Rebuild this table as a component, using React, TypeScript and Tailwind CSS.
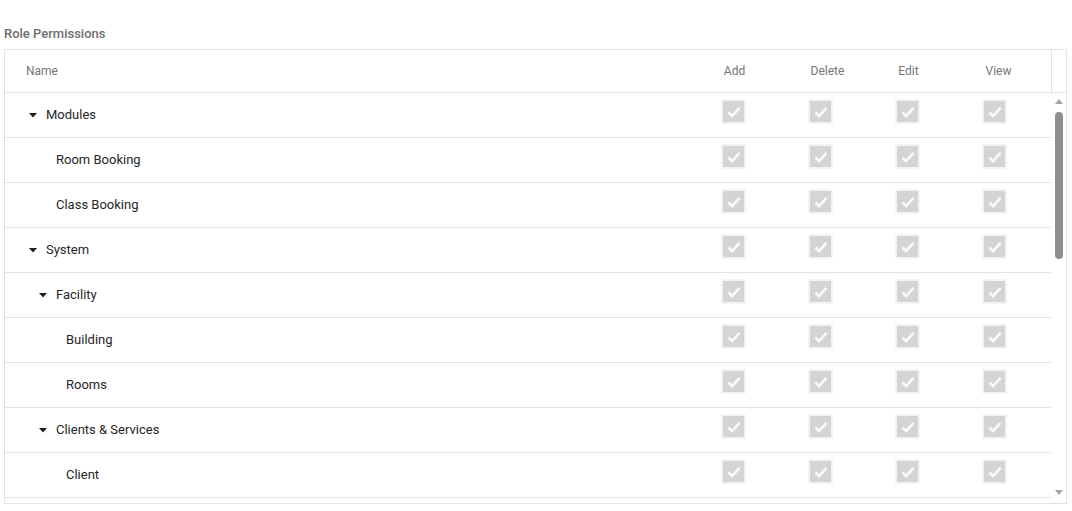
import React from 'react'

type Row = { name: string; level: number; group?: boolean }

const rows: Row[] = [
  { name: 'Modules', level: 0, group: true },
  { name: 'Room Booking', level: 1 },
  { name: 'Class Booking', level: 1 },
  { name: 'System', level: 0, group: true },
  { name: 'Facility', level: 1, group: true },
  { name: 'Building', level: 2 },
  { name: 'Rooms', level: 2 },
  { name: 'Clients & Services', level: 1, group: true },
  { name: 'Client', level: 2 },
  // partly hidden below the fold
  { name: '', level: 2 },
]

const cols = [
  { label: 'Add', pad: 'pl-[2px]' },
  { label: 'Delete', pad: 'pl-[14px]' },
  { label: 'Edit', pad: 'pl-[2px]' },
  { label: 'View', pad: 'pl-[8px]' },
]

const indent = ['pl-[23px]', 'pl-[33px]', 'pl-[43px]']
const leafIndent = ['pl-[41px]', 'pl-[51px]', 'pl-[61px]']

function Caret() {
  return (
    <svg width="10" height="6" viewBox="0 0 10 6" className="mr-[8px] shrink-0">
      <path d="M1 1h8L5 5.5z" fill="#1f1f1f" />
    </svg>
  )
}

function Check() {
  return (
    <div className="w-[25px] h-[25px] rounded-[2px] bg-[#f3f3f3] flex items-center justify-center">
      <div className="w-[21px] h-[21px] bg-[#d4d4d4] flex items-center justify-center">
        <svg width="14" height="12" viewBox="0 0 14 12">
          <path d="M1.5 6.5l3.6 3.6L12.5 1.8" fill="none" stroke="#fafafa" strokeWidth="2.6" />
        </svg>
      </div>
    </div>
  )
}

export default function App() {
  return (
    <div className="w-[1072px] h-[511px] bg-white px-[4px] pt-[26px]" style={{ fontFamily: 'Roboto, "Liberation Sans", sans-serif' }}>
      <div className="h-[16px] text-[13px] leading-[16px] font-medium text-[#6e6e6e]">Role Permissions</div>
      <div className="mt-[7px] w-[1063px] border border-[#e2e2e2]">
        {/* header */}
        <div className="flex h-[43px] border-b border-[#e2e2e2] text-[12px] text-[#757575]">
          <div className="w-[685px] flex items-center pl-[21px]">Name</div>
          {cols.map((c) => (
            <div key={c.label} className={`w-[87px] flex items-center justify-center ${c.pad}`}>
              {c.label}
            </div>
          ))}
          <div className="w-[13px]" />
          <div className="w-[15px] border-l border-[#e2e2e2]" />
        </div>
        {/* body */}
        <div className="flex h-[410px] overflow-hidden">
          <div className="w-[1046px]">
            {rows.map((r, i) => (
              <div key={i} className="flex h-[45px] border-b border-[#e2e2e2]">
                <div
                  className={`w-[685px] flex items-center text-[13px] text-[#262626] ${
                    r.group ? indent[r.level] : leafIndent[r.level]
                  }`}
                >
                  {r.group && <Caret />}
                  {r.name}
                </div>
                {cols.map((c) => (
                  <div key={c.label} className="w-[87px] flex justify-center pt-[6px]">
                    <Check />
                  </div>
                ))}
              </div>
            ))}
          </div>
          {/* scrollbar */}
          <div className="w-[15px] flex flex-col items-center pl-[1px]">
            <svg width="8" height="5" viewBox="0 0 8 5" className="mt-[6px]">
              <path d="M0 5L4 0l4 5z" fill="#a3a3a3" />
            </svg>
            <div className="mt-[8px] w-[8px] h-[147px] rounded-full bg-[#8f8f8f]" />
            <div className="flex-1" />
            <svg width="8" height="5" viewBox="0 0 8 5" className="mb-[8px]">
              <path d="M0 0h8L4 5z" fill="#a3a3a3" />
            </svg>
          </div>
        </div>
      </div>
    </div>
  )
}
